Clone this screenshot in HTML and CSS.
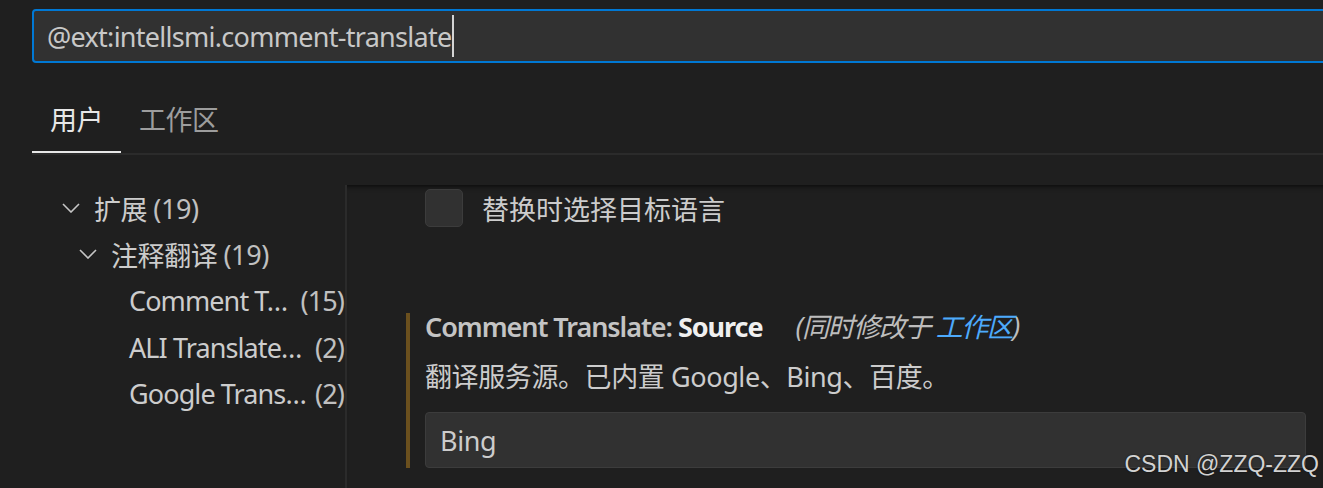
FILE: index.html
```html
<!DOCTYPE html>
<html lang="zh-CN">
<head>
<meta charset="utf-8">
<title>设置</title>
<link rel="stylesheet" href="styles.css">
</head>
<body>
<div class="settings">
  <header class="search-row">
    <div class="search"><span class="query">@ext:intellsmi.comment-translate</span><span class="caret"></span></div>
  </header>
  <nav class="tabs">
    <div class="tab active">用户</div>
    <div class="tab">工作区</div>
  </nav>
  <div class="body">
    <aside class="toc">
      <div class="row lvl1">
        <svg class="chev" width="18" height="10" viewBox="0 0 18 10"><polyline points="1,1 9,9 17,1" fill="none" stroke="#c5c5c5" stroke-width="1.6"/></svg>
        <span class="name">扩展</span><span class="num">(19)</span>
      </div>
      <div class="row lvl2">
        <svg class="chev" width="18" height="10" viewBox="0 0 18 10"><polyline points="1,1 9,9 17,1" fill="none" stroke="#c5c5c5" stroke-width="1.6"/></svg>
        <span class="name">注释翻译</span><span class="num">(19)</span>
      </div>
      <div class="row lvl3"><span class="name">Comment T…</span><span class="num end">(15)</span></div>
      <div class="row lvl3"><span class="name">ALI Translate…</span><span class="num end">(2)</span></div>
      <div class="row lvl3"><span class="name">Google Trans…</span><span class="num end">(2)</span></div>
    </aside>
    <main class="content">
      <div class="setting">
        <div class="check-row">
          <span class="checkbox"></span>
          <span class="check-label">替换时选择目标语言</span>
        </div>
      </div>
      <div class="setting modified">
        <div class="title"><span class="cat">Comment Translate: </span><span class="key">Source</span><span class="also">(同时修改于 <span class="link">工作区</span>)</span></div>
        <div class="desc">翻译服务源。已内置 Google、Bing、百度。</div>
        <div class="select">Bing</div>
      </div>
    </main>
  </div>
  <div class="watermark">CSDN @ZZQ-ZZQ</div>
</div>
</body>
</html>
```
FILE: styles.css
```css
* { box-sizing: border-box; }
html, body {
  margin: 0;
  padding: 0;
  width: 1323px;
  height: 488px;
  overflow: hidden;
  background: #1f1f1f;
}
.settings {
  position: relative;
  height: 488px;
  overflow: hidden;
  font-family: "Noto Sans", "Noto Sans CJK SC", sans-serif;
  font-size: 27px;
  color: #cccccc;
}

/* search */
.search-row {
  padding-top: 9px;
  padding-left: 32px;
}
.search {
  height: 54px;
  margin-right: -20px;
  border: 2px solid #0078d4;
  border-radius: 4px;
  background: #313131;
  padding-left: 13px;
  display: flex;
  align-items: center;
  color: #c8c8c8;
  letter-spacing: -0.72px;
}
.caret {
  display: inline-block;
  width: 2px;
  height: 42px;
  background: #d4d4d4;
  margin-left: 1px;
}

/* tabs */
.tabs {
  display: flex;
  margin: 37px 0 0 32px;
  border-bottom: 2px solid #2b2b2b;
}
.tab {
  padding: 0 18px 11px;
  line-height: 40px;
  border-bottom: 2px solid transparent;
  color: #9d9d9d;
  letter-spacing: -0.5px;
}
.tab.active {
  color: #e7e7e7;
  border-bottom-color: #e7e7e7;
}

/* body */
.body {
  display: flex;
  margin-top: 30px;
  height: 400px;
}
.toc {
  width: 345px;
  flex: none;
  padding-top: 0;
}
.row {
  display: flex;
  align-items: center;
  height: 46.3px;
  white-space: nowrap;
  letter-spacing: -0.4px;
}
.row .chev { flex: none; margin-right: 14px; }
.lvl1 { padding-left: 62px; }
.lvl2 { padding-left: 79px; }
.lvl3 { padding-left: 129px; padding-right: 1px; letter-spacing: -0.9px; }
.num { color: #c0c0c0; margin-left: 6px; }
.num.end { margin-left: auto; }

.content {
  flex: 1;
  border-left: 2px solid #2b2b2b;
  box-shadow: #000000 0 6px 6px -6px inset;
  padding: 4px 17px 0 0;
}
.setting {
  margin-left: 59px;
  border-left: 4px solid transparent;
  padding-left: 15px;
}
.check-row {
  display: flex;
  align-items: center;
  height: 38px;
}
.checkbox {
  width: 38px;
  height: 38px;
  flex: none;
  border: 1px solid #3c3c3c;
  border-radius: 5px;
  background: #313131;
  margin-right: 19px;
}

.setting.modified {
  margin-top: 86px;
  border-left-color: #6b501e;
}
.title {
  line-height: 28px;
  letter-spacing: -1.05px;
}
.cat { font-weight: 600; color: #c4c4c4; }
.key { font-weight: 700; color: #f0f0f0; }
.also {
  font-style: italic;
  color: #bdbdbd;
  margin-left: 33px;
  letter-spacing: -1.4px;
}
.link { color: #4daafc; }
.desc {
  margin-top: 22px;
  line-height: 28px;
  letter-spacing: -0.4px;
}
.select {
  margin-top: 21px;
  height: 56px;
  border: 1px solid #3c3c3c;
  border-radius: 4px;
  background: #313131;
  padding-left: 14px;
  display: flex;
  align-items: center;
  letter-spacing: -0.4px;
}

.watermark {
  position: absolute;
  right: 4px;
  top: 451px;
  font-family: "Liberation Sans", Arial, sans-serif;
  font-size: 23px;
  color: #d2d2d2;
  text-shadow: 0 0 2px rgba(0,0,0,0.6);
}
```
